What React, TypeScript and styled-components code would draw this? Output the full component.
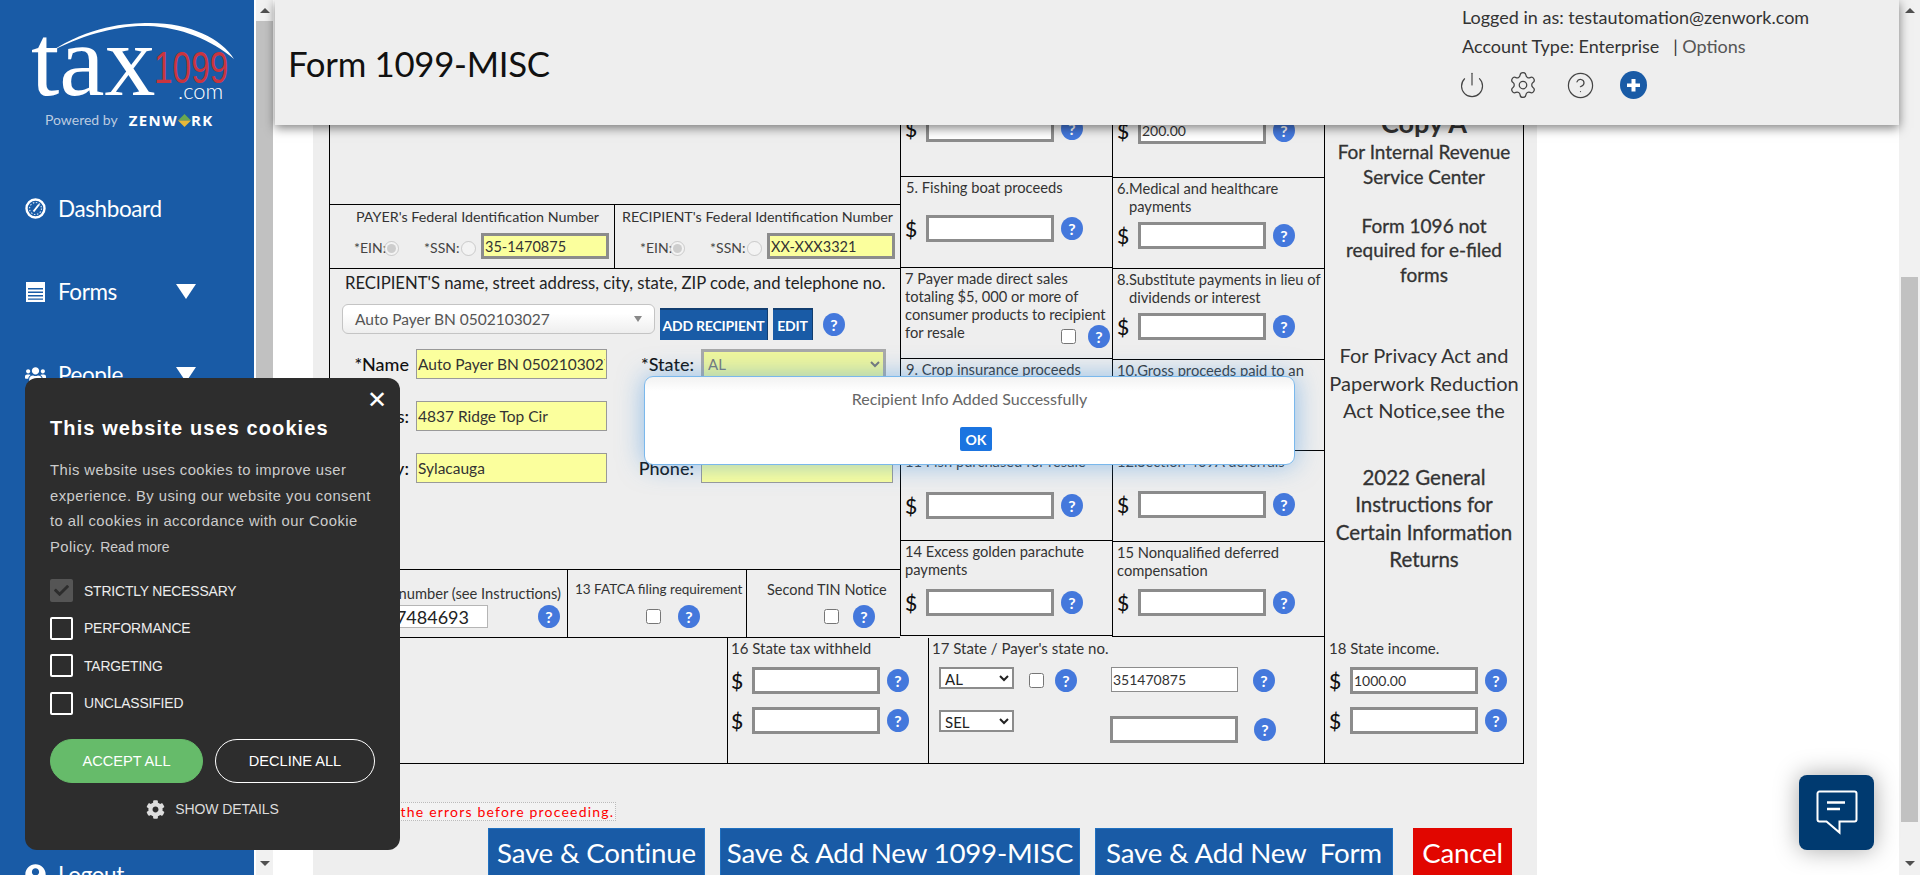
import styled, { createGlobalStyle } from "styled-components";
import { Power, Settings, CircleHelp } from "lucide-react";
import { FaUsers, FaCog, FaCheck, FaUserCircle } from "react-icons/fa";

const GlobalStyle = createGlobalStyle`
  html, body {
    margin: 0;
    height: 100%;
    overflow: hidden;
    background: #fff;
    font-family: Lato, "Open Sans", sans-serif;
  }
  * { box-sizing: border-box; }
`;

const Page = styled.div`
  position: relative;
  display: flex;
  width: 1920px;
  height: 875px;
  overflow: hidden;
`;

/* sidebar */
const Sidebar = styled.aside`
  flex: none;
  width: 254px;
  background: #195ba6;
  color: #fff;
`;
const Logo = styled.div`
  position: relative;
  height: 167px;
`;
const LogoArc = styled.svg`
  position: absolute;
  left: 40px;
  top: 18px;
`;
const LogoTax = styled.span`
  position: absolute;
  left: 31px;
  top: 11px;
  font: 102px/100px "Liberation Serif", serif;
`;
const LogoNum = styled.span`
  position: absolute;
  left: 154px;
  top: 46px;
  font: 44px/44px "Liberation Sans", sans-serif;
  color: #c9353f;
  transform: scaleX(0.76);
  transform-origin: left;
`;
const LogoCom = styled.span`
  position: absolute;
  left: 178px;
  top: 80px;
  font: 300 22px/22px Lato, sans-serif;
`;
const Powered = styled.div`
  position: absolute;
  left: 45px;
  top: 109px;
  display: flex;
  align-items: center;
  width: 190px;
  font-size: 14px;
  line-height: 22px;
  color: #bccbe0;
`;
const Zenwork = styled.b`
  display: flex;
  align-items: center;
  margin-left: 11px;
  font: 700 15px/22px "Open Sans", sans-serif;
  letter-spacing: 1.4px;
  color: #fff;
`;
const Nav = styled.nav`
  display: flex;
  flex-direction: column;
`;
const NavItem = styled.div<{ $mt?: number }>`
  display: flex;
  align-items: center;
  height: 83px;
  margin-top: ${(p) => p.$mt ?? 0}px;
  padding-left: 25px;
  font-size: 22.5px;
  letter-spacing: -0.4px;
`;
const NavLabel = styled.span`
  width: 118px;
  margin-left: 12px;
`;
const Caret = styled.i`
  width: 0;
  height: 0;
  border-left: 10px solid transparent;
  border-right: 10px solid transparent;
  border-top: 15px solid #fff;
`;

/* scrollbars */
const ScrollTrack = styled.div<{ $w: number; $ml: number }>`
  flex: none;
  display: flex;
  flex-direction: column;
  align-items: center;
  width: ${(p) => p.$w}px;
  margin-left: ${(p) => p.$ml}px;
  padding: 8px 0 8px;
  background: #f1f1f1;
`;
const Thumb = styled.div<{ $mt: number; $h: number; $w: number }>`
  width: ${(p) => p.$w}px;
  height: ${(p) => p.$h}px;
  margin-top: ${(p) => p.$mt}px;
  background: #c1c1c1;
`;
const ArrowUp = styled.i`
  width: 0;
  height: 0;
  border-left: 5px solid transparent;
  border-right: 5px solid transparent;
  border-bottom: 5px solid #505050;
`;
const ArrowDown = styled.i`
  width: 0;
  height: 0;
  margin-top: auto;
  margin-bottom: 1px;
  border-left: 5px solid transparent;
  border-right: 5px solid transparent;
  border-top: 5px solid #505050;
`;

/* header */
const Main = styled.main`
  position: relative;
  flex: 1;
  min-width: 0;
  padding-left: 40px;
`;
const Header = styled.header`
  position: absolute;
  z-index: 5;
  left: 2px;
  right: 0;
  top: 0;
  height: 125px;
  display: flex;
  justify-content: space-between;
  padding: 0 90px 0 13px;
  background: #eee;
  box-shadow: 0 3px 10px rgba(0, 0, 0, 0.5);
`;
const PageTitle = styled.h1`
  margin: 43px 0 0;
  font-size: 34.8px;
  line-height: 42px;
  font-weight: 400;
  letter-spacing: -0.3px;
  color: #111;
`;
const UserBox = styled.div`
  width: 347px;
  padding-top: 3px;
  font-size: 18px;
  line-height: 29px;
  white-space: nowrap;
  color: #333;
`;
const Options = styled.span`
  color: #555;
`;
const HeaderIcons = styled.div`
  display: flex;
  align-items: center;
  height: 30px;
  margin: 9px 0 0 -4px;
  color: #444;
`;
const IconSlot = styled.span<{ $w: number }>`
  display: flex;
  width: ${(p) => p.$w}px;
`;

/* form */
const Panel = styled.section`
  width: 1224px;
  height: 875px;
  padding-left: 16px;
  background: #eee;
`;
const FormGrid = styled.div`
  display: grid;
  grid-template-columns: 571px 424px 200px;
  grid-template-rows: 638px 126px;
  width: 1196px;
  font-size: 14px;
  line-height: 18px;
  color: #222;
`;
const LeftCol = styled.div`
  display: flex;
  flex-direction: column;
  border-left: 1px solid #000;
  border-bottom: 1px solid #000;
`;
const TopBlank = styled.div`
  height: 205px;
  border-bottom: 1px solid #000;
`;
const FinRow = styled.div`
  display: flex;
  height: 64px;
  border-bottom: 1px solid #000;
`;
const FinCell = styled.div<{ $w: number; $pad: number; $border?: boolean }>`
  width: ${(p) => p.$w}px;
  padding: 3px 0 0 ${(p) => p.$pad}px;
  border-left: ${(p) => (p.$border ? "1px solid #000" : "none")};
`;
const FinTitle = styled.div<{ $ml: number }>`
  margin-left: ${(p) => p.$ml}px;
  font-size: 14.3px;
  white-space: nowrap;
  color: #333;
`;
const FinInputs = styled.div`
  display: flex;
  align-items: center;
  margin-top: 7px;
`;
const FinLabel = styled.span<{ $w: number }>`
  width: ${(p) => p.$w}px;
  padding-top: 4px;
  color: #444;
`;
const Radio = styled.input.attrs({ type: "radio", disabled: true })`
  flex: none;
  width: 15px;
  height: 15px;
  margin: 4px 0 0;
`;
const YellowInput = styled.input.attrs({ readOnly: true })<{ $w: number; $thin?: boolean; $ml?: number }>`
  flex: none;
  width: ${(p) => p.$w}px;
  height: ${(p) => (p.$thin ? 30 : 26)}px;
  margin-left: ${(p) => p.$ml ?? 0}px;
  padding: 0 1px;
  border: ${(p) => (p.$thin ? "1px solid #999" : "3px solid #8c8c8c")};
  border-radius: 0;
  outline: none;
  background: #fbff9d;
  font: ${(p) => (p.$thin ? 15.5 : 14.5)}px Lato, sans-serif;
  color: #333;
`;
const RecipientBox = styled.div`
  height: 301px;
  padding-top: 2px;
  border-bottom: 1px solid #000;
`;
const RecipientTitle = styled.div`
  margin-left: 15px;
  font-size: 16.7px;
  line-height: 24px;
  white-space: nowrap;
  color: #222;
`;
const PickRow = styled.div`
  display: flex;
  align-items: flex-start;
  margin: 9px 0 0 12px;
`;
const RecipientPick = styled.div`
  display: flex;
  align-items: center;
  justify-content: space-between;
  width: 313px;
  height: 30px;
  padding: 0 12px;
  border: 1px solid #c4c4c4;
  border-radius: 6px;
  background: linear-gradient(#fff 30%, #eee);
  font-size: 15.5px;
  color: #555;
`;
const PickCaret = styled.i`
  width: 0;
  height: 0;
  border-left: 4px solid transparent;
  border-right: 4px solid transparent;
  border-top: 6px solid #888;
`;
const BlueButton = styled.button<{ $w: number }>`
  width: ${(p) => p.$w}px;
  height: 32px;
  margin: 4px 0 0 5px;
  padding: 0;
  border: 0;
  border-top: 2px solid #123e70;
  border-right: 1px solid #123e70;
  background: #195ba6;
  font: 700 14px Lato, sans-serif;
  letter-spacing: -0.2px;
  color: #fff;
`;
const FieldRow = styled.div<{ $mt: number }>`
  display: flex;
  align-items: center;
  height: 30px;
  margin-top: ${(p) => p.$mt}px;
  padding-left: 25px;
`;
const FieldLabel = styled.label<{ $w: number }>`
  flex: none;
  display: flex;
  justify-content: flex-end;
  width: ${(p) => p.$w}px;
  padding-right: 7px;
  white-space: nowrap;
  font-size: 18px;
  font-weight: 500;
  color: #111;
`;
const StateSelect = styled.select.attrs({ disabled: true })`
  width: 185px;
  height: 30px;
  border: 3px solid #a9a9a9;
  border-radius: 0;
  background: #f0f79c;
  font: 15px Lato, sans-serif;
  color: #777;
  opacity: 1;
`;
const InfoRow = styled.div`
  display: flex;
  height: 67px;
`;
const InfoCell = styled.div<{ $w: number; $border?: boolean; $pt: number }>`
  width: ${(p) => p.$w}px;
  padding-top: ${(p) => p.$pt}px;
  border-left: ${(p) => (p.$border ? "1px solid #000" : "none")};
  white-space: nowrap;
`;
const AccountTitle = styled.div`
  padding-right: 6px;
  text-align: right;
  font-size: 14.7px;
  color: #333;
`;
const AccountRow = styled.div`
  display: flex;
  justify-content: flex-end;
  align-items: center;
  margin-top: 3px;
  padding-right: 7px;
`;
const AccountInput = styled.input.attrs({ readOnly: true })`
  width: 150px;
  height: 23px;
  margin-right: 50px;
  padding: 0 18px 0 0;
  border: 1px solid #b5b5b5;
  border-radius: 0;
  background: #fff;
  text-align: right;
  font: 18px Lato, sans-serif;
  color: #222;
`;
const InfoTitle = styled.div<{ $ml: number; $size: number }>`
  margin-left: ${(p) => p.$ml}px;
  font-size: ${(p) => p.$size}px;
  color: #333;
`;
const CheckRow = styled.div<{ $pl: number; $gap: number; $mt: number }>`
  display: flex;
  align-items: center;
  gap: ${(p) => p.$gap}px;
  margin-top: ${(p) => p.$mt}px;
  padding-left: ${(p) => p.$pl}px;
`;
const CheckBox = styled.input.attrs({ type: "checkbox" })<{ $ml?: number }>`
  flex: none;
  width: 15px;
  height: 15px;
  margin: 0 0 0 ${(p) => p.$ml ?? 0}px;
`;

const MidCols = styled.div`
  display: grid;
  grid-template-columns: 212px 212px;
  align-items: start;
`;
const MidCol = styled.div`
  display: flex;
  flex-direction: column;
`;
const BoxCell = styled.div<{ $h: number }>`
  height: ${(p) => p.$h}px;
  padding: 1px 2px 0 4px;
  border-left: 1px solid #000;
  border-bottom: 1px solid #000;
`;
const CellTitle = styled.div<{ $hang?: boolean; $pl?: number; $size?: number }>`
  padding-left: ${(p) => (p.$hang ? 12 : p.$pl ?? 0)}px;
  text-indent: ${(p) => (p.$hang ? -12 : 0)}px;
  font-size: ${(p) => p.$size ?? 14.7}px;
  color: #333;
  white-space: nowrap;
`;
const ResaleRow = styled.div`
  display: flex;
  align-items: flex-start;
  height: 18px;
`;
const ResaleTools = styled.div`
  display: flex;
  align-items: center;
  gap: 12px;
  margin: 2px 0 0 auto;
`;
const MoneyRow = styled.div<{ $mt: number }>`
  display: flex;
  align-items: center;
  margin-top: ${(p) => p.$mt}px;
`;
const Dollar = styled.span`
  width: 21px;
  font-size: 21px;
  line-height: 26px;
  font-weight: 500;
  color: #111;
`;
const AmountInput = styled.input.attrs({ readOnly: true })<{ $w?: number; $h?: number; $thin?: boolean; $ml?: number }>`
  flex: none;
  width: ${(p) => p.$w ?? 128}px;
  height: ${(p) => p.$h ?? 27}px;
  margin-left: ${(p) => p.$ml ?? 0}px;
  padding: 0 1px;
  border: ${(p) => (p.$thin ? "1px solid #8c8c8c" : "3px solid #8c8c8c")};
  border-radius: 0;
  background: #fff;
  font: 14px Lato, sans-serif;
  color: #333;
`;
const Help = styled.span<{ $ml?: number }>`
  flex: none;
  display: inline-flex;
  align-items: center;
  justify-content: center;
  width: 22px;
  height: 23px;
  margin-left: ${(p) => p.$ml ?? 0}px;
  border-radius: 50%;
  background: #4478dc;
  font-size: 16px;
  font-weight: 700;
  color: #fff;
`;
const CopyCol = styled.div`
  padding-top: 106px;
  border-left: 1px solid #000;
  border-right: 1px solid #000;
  text-align: center;
  color: #333;
`;
const CopyHead = styled.div`
  font-size: 27px;
  line-height: 34px;
  font-weight: 700;
`;
const CopyBlock = styled.div<{ $mt: number; $size: number; $lh: number; $heavy?: boolean }>`
  margin-top: ${(p) => p.$mt}px;
  font-size: ${(p) => p.$size}px;
  line-height: ${(p) => p.$lh}px;
  -webkit-text-stroke: ${(p) => (p.$heavy ? "0.3px" : "0")};
`;
const BottomRow = styled.div`
  grid-column: 1 / 3;
  display: flex;
  border-bottom: 1px solid #000;
`;
const BottomCell = styled.div<{ $w: number; $border?: boolean }>`
  width: ${(p) => p.$w}px;
  padding: 1px 0 0 3px;
  border-left: ${(p) => (p.$border ? "1px solid #000" : "none")};
`;
const BlankCell = styled.div`
  width: 398px;
  border-left: 1px solid #000;
`;
const LastCell = styled.div`
  padding: 1px 0 0 4px;
  border-left: 1px solid #000;
  border-right: 1px solid #000;
  border-bottom: 1px solid #000;
`;
const StateRow = styled.div<{ $mt: number }>`
  display: flex;
  align-items: flex-start;
  margin-top: ${(p) => p.$mt}px;
`;
const SmallSelect = styled.select`
  flex: none;
  width: 75px;
  height: 22px;
  margin-left: 7px;
  border: 2px solid #8c8c8c;
  border-radius: 0;
  background: #fff;
  font: 15px Lato, sans-serif;
  color: #222;
`;
const ErrorNote = styled.div`
  width: max-content;
  margin: 38px 0 0 43px;
  padding: 0 1px;
  border: 1px dotted #bbb;
  background: #f3f3f3;
  font-size: 14px;
  line-height: 17px;
  letter-spacing: 1.2px;
  color: #f00;
`;
const ActionRow = styled.div`
  display: flex;
  margin: 7px 0 0 159px;
`;
const ActionButton = styled.button<{ $w: number; $ml: number; $red?: boolean }>`
  flex: none;
  width: ${(p) => p.$w}px;
  height: 60px;
  margin-left: ${(p) => p.$ml}px;
  padding: 0 0 12px;
  border: 1px solid ${(p) => (p.$red ? "#e10600" : "#2070c0")};
  background: ${(p) => (p.$red ? "#e10600" : "#195ba6")};
  white-space: pre;
  font: 27.7px Lato, sans-serif;
  letter-spacing: -0.2px;
  color: #fff;
`;

/* overlays */
const Dialog = styled.div`
  position: absolute;
  z-index: 4;
  left: 371px;
  top: 376px;
  width: 651px;
  height: 89px;
  padding-top: 13px;
  border: 1px solid #7ab8ec;
  border-radius: 9px;
  background: linear-gradient(#f2f2f2, #fff 14px);
  box-shadow: 0 0 26px rgba(70, 150, 225, 0.55);
  text-align: center;
  font-size: 16px;
  line-height: 18px;
  color: #666;
`;
const OkButton = styled.button`
  display: block;
  width: 32px;
  height: 24px;
  margin: 19px 0 0 315px;
  padding: 0;
  border: 0;
  border-radius: 2px;
  background: #1b74e0;
  font: 700 14px Lato, sans-serif;
  color: #fff;
`;
const Cookie = styled.div`
  position: absolute;
  z-index: 10;
  left: 25px;
  top: 378px;
  width: 375px;
  height: 472px;
  padding: 36px 25px 0;
  border-radius: 12px;
  background: #2d2d2d;
  font-family: "Liberation Sans", Arial, sans-serif;
  color: #fff;
`;
const CookieClose = styled.span`
  position: absolute;
  right: 13px;
  top: 8px;
  font-size: 24px;
  line-height: 28px;
`;
const CookieTitle = styled.div`
  font-size: 20px;
  line-height: 28px;
  font-weight: 700;
  letter-spacing: 1.1px;
`;
const CookieText = styled.p`
  margin: 16px 0 0;
  font-size: 14.8px;
  line-height: 25.6px;
  letter-spacing: 0.45px;
  color: #ccc;
`;
const ReadMore = styled.span`
  font-size: 14px;
  letter-spacing: 0;
`;
const ConsentList = styled.div`
  margin-top: 19px;
`;
const ConsentRow = styled.div`
  display: flex;
  align-items: center;
  height: 23px;
  margin-bottom: 14.5px;
  font-size: 13.9px;
  letter-spacing: -0.15px;
  color: #eee;
`;
const ConsentBox = styled.span<{ $on?: boolean }>`
  display: flex;
  align-items: center;
  justify-content: center;
  width: 23px;
  height: 23px;
  margin-right: 11px;
  border: ${(p) => (p.$on ? "0" : "2px solid #fff")};
  border-radius: 2px;
  background: ${(p) => (p.$on ? "#555" : "transparent")};
  color: #2d2d2d;
`;
const CookieButtons = styled.div`
  display: flex;
  gap: 12px;
  margin-top: 24px;
`;
const PillButton = styled.button<{ $w: number; $green?: boolean }>`
  width: ${(p) => p.$w}px;
  height: 44px;
  padding: 0;
  border: 1px solid ${(p) => (p.$green ? "#66bb6a" : "#fff")};
  border-radius: 22px;
  background: ${(p) => (p.$green ? "#66bb6a" : "transparent")};
  font: 14.6px "Liberation Sans", Arial, sans-serif;
  color: #fff;
`;
const ShowDetails = styled.div`
  display: flex;
  align-items: center;
  justify-content: center;
  gap: 10px;
  margin-top: 17px;
  font-size: 14px;
  letter-spacing: -0.1px;
  color: #ddd;
`;
const ChatButton = styled.div`
  position: absolute;
  z-index: 6;
  right: 46px;
  bottom: 25px;
  display: flex;
  align-items: center;
  justify-content: center;
  width: 75px;
  height: 75px;
  border-radius: 8px;
  background: #003a70;
  box-shadow: 0 0 24px rgba(0, 0, 0, 0.35);
`;

const DashIcon = () => (
  <svg width="21" height="21" viewBox="0 0 21 21" fill="none">
    <circle cx="10.5" cy="10.5" r="9" stroke="#fff" strokeWidth="2.4" />
    <circle cx="10.5" cy="10.5" r="6" stroke="#cfe0f2" strokeWidth="1.2" strokeDasharray="1.5 1.6" />
    <path d="M8.5 13.5 14 6.5" stroke="#fff" strokeWidth="2" />
  </svg>
);

const FormsIcon = () => (
  <svg width="21" height="21" viewBox="0 0 21 21" fill="#fff">
    <rect x="1" y="1" width="19" height="20" />
    <path d="M3 7h15v1.4H3zM3 10.5h15v1.4H3zM3 14h15v1.4H3zM3 17.5h15v1.2H3z" fill="#195ba6" />
  </svg>
);

const ChatIcon = () => (
  <svg width="42" height="46" viewBox="0 0 42 46" fill="none" stroke="#fff">
    <path d="M3.5 1.500h35a2 2 0 0 1 2 2v26a2 2 0 0 1-2 2H23.500v11l-13-11H3.500a2 2 0 0 1-2-2v-26a2 2 0 0 1 2-2z" strokeWidth="2" />
    <path d="M11 12.500h18M11 19h13" strokeWidth="2.4" />
  </svg>
);

const Money = ({ mt, value = "" }: { mt: number; value?: string }) => (
  <MoneyRow $mt={mt}>
    <Dollar>$</Dollar>
    <AmountInput value={value} />
    <Help $ml={7}>?</Help>
  </MoneyRow>
);

export default function App() {
  return (
    <Page>
      <GlobalStyle />
      <Sidebar>
        <Logo>
          <LogoArc width="200" height="50" viewBox="0 0 200 50">
            <path d="M10 34C50 8 85 5 110 5c40 0 72 16 84 36C172 22 140 9 108 8 76 7 40 18 10 34z" fill="#fff" />
          </LogoArc>
          <LogoTax>tax</LogoTax>
          <LogoNum>1099</LogoNum>
          <LogoCom>.com</LogoCom>
          <Powered>
            Powered by
            <Zenwork>
              ZENW
              <svg width="13" height="13" viewBox="0 0 13 13">
                <path d="M6.500 0 13 6.500H0z" fill="#6aa84f" />
                <path d="M6.500 13 0 6.500h13z" fill="#e8b93a" />
              </svg>
              RK
            </Zenwork>
          </Powered>
        </Logo>
        <Nav>
          <NavItem>
            <DashIcon />
            <NavLabel>Dashboard</NavLabel>
          </NavItem>
          <NavItem>
            <FormsIcon />
            <NavLabel>Forms</NavLabel>
            <Caret />
          </NavItem>
          <NavItem>
            <FaUsers size={21} />
            <NavLabel>People</NavLabel>
            <Caret />
          </NavItem>
          <NavItem $mt={417}>
            <FaUserCircle size={21} />
            <NavLabel>Logout</NavLabel>
          </NavItem>
        </Nav>
      </Sidebar>
      <ScrollTrack $w={17} $ml={2}>
        <ArrowUp />
        <Thumb $w={17} $h={480} $mt={8} />
        <ArrowDown />
      </ScrollTrack>

      <Main>
        <Header>
          <PageTitle>Form 1099-MISC</PageTitle>
          <UserBox>
            <div>Logged in as: testautomation@zenwork.com</div>
            <div>
              Account Type: Enterprise &nbsp; | <Options>Options</Options>
            </div>
            <HeaderIcons>
              <IconSlot $w={50}>
                <Power size={28} strokeWidth={1} />
              </IconSlot>
              <IconSlot $w={58}>
                <Settings size={30} strokeWidth={1} />
              </IconSlot>
              <IconSlot $w={54}>
                <CircleHelp size={29} strokeWidth={1} />
              </IconSlot>
              <svg width="27" height="28" viewBox="0 0 27 28">
                <ellipse cx="13.5" cy="14" rx="13.5" ry="14" fill="#195ba6" />
                <path d="M11.500 8h4v4.500H20v3.500h-4.500v4.500h-4V16H7v-3.500h4.500z" fill="#fff" />
              </svg>
            </HeaderIcons>
          </UserBox>
        </Header>

        <Panel>
          <FormGrid>
            <LeftCol>
              <TopBlank />
              <FinRow>
                <FinCell $w={284} $pad={24}>
                  <FinTitle $ml={2}>PAYER's Federal Identification Number</FinTitle>
                  <FinInputs>
                    <FinLabel $w={30}>*EIN:</FinLabel>
                    <Radio defaultChecked name="payer" />
                    <FinLabel $w={62}>&nbsp;&nbsp;&nbsp;&nbsp;&nbsp;&nbsp;&nbsp;*SSN:</FinLabel>
                    <Radio name="payer" />
                    <YellowInput $w={128} $ml={5} value="35-1470875" />
                  </FinInputs>
                </FinCell>
                <FinCell $w={286} $pad={25} $border>
                  <FinTitle $ml={-18}>RECIPIENT's Federal Identification Number</FinTitle>
                  <FinInputs>
                    <FinLabel $w={30}>*EIN:</FinLabel>
                    <Radio defaultChecked name="recipient" />
                    <FinLabel $w={62}>&nbsp;&nbsp;&nbsp;&nbsp;&nbsp;&nbsp;&nbsp;*SSN:</FinLabel>
                    <Radio name="recipient" />
                    <YellowInput $w={128} $ml={5} value="XX-XXX3321" />
                  </FinInputs>
                </FinCell>
              </FinRow>
              <RecipientBox>
                <RecipientTitle>RECIPIENT'S name, street address, city, state, ZIP code, and telephone no.</RecipientTitle>
                <PickRow>
                  <RecipientPick>
                    Auto Payer BN 0502103027
                    <PickCaret />
                  </RecipientPick>
                  <BlueButton $w={108}>ADD RECIPIENT</BlueButton>
                  <BlueButton $w={40}>EDIT</BlueButton>
                  <Help $ml={10} style={{ marginTop: 9 }}>?</Help>
                </PickRow>
                <FieldRow $mt={9}>
                  <FieldLabel $w={61}>*Name</FieldLabel>
                  <YellowInput $w={191} $thin value="Auto Payer BN 0502103027" />
                  <FieldLabel $w={94}>*State:</FieldLabel>
                  <StateSelect>
                    <option>AL</option>
                  </StateSelect>
                </FieldRow>
                <FieldRow $mt={22}>
                  <FieldLabel $w={61}>*Address:</FieldLabel>
                  <YellowInput $w={191} $thin value="4837 Ridge Top Cir" />
                </FieldRow>
                <FieldRow $mt={22}>
                  <FieldLabel $w={61}>*City:</FieldLabel>
                  <YellowInput $w={191} $thin value="Sylacauga" />
                  <FieldLabel $w={94}>Phone:</FieldLabel>
                  <YellowInput $w={192} $thin value="" />
                </FieldRow>
              </RecipientBox>
              <InfoRow>
                <InfoCell $w={237} $pt={14}>
                  <AccountTitle>Account number (see Instructions)</AccountTitle>
                  <AccountRow>
                    <AccountInput value="7484693" />
                    <Help>?</Help>
                  </AccountRow>
                </InfoCell>
                <InfoCell $w={179} $pt={10} $border>
                  <InfoTitle $ml={7} $size={13.5}>13 FATCA filing requirement</InfoTitle>
                  <CheckRow $pl={78} $gap={17} $mt={7}>
                    <CheckBox />
                    <Help>?</Help>
                  </CheckRow>
                </InfoCell>
                <InfoCell $w={154} $pt={11} $border>
                  <InfoTitle $ml={20} $size={14.5}>Second TIN Notice</InfoTitle>
                  <CheckRow $pl={77} $gap={14} $mt={6}>
                    <CheckBox />
                    <Help>?</Help>
                  </CheckRow>
                </InfoCell>
              </InfoRow>
            </LeftCol>

            <MidCols>
              <MidCol>
                <BoxCell $h={177}>
                  <Money mt={114} />
                </BoxCell>
                <BoxCell $h={91}>
                  <CellTitle $pl={1}>5. Fishing boat proceeds</CellTitle>
                  <Money mt={19} />
                </BoxCell>
                <BoxCell $h={91}>
                  <CellTitle>7 Payer made direct sales</CellTitle>
                  <CellTitle>totaling $5, 000 or more of</CellTitle>
                  <CellTitle>consumer products to recipient</CellTitle>
                  <ResaleRow>
                    <CellTitle>for resale</CellTitle>
                    <ResaleTools>
                      <CheckBox />
                      <Help>?</Help>
                    </ResaleTools>
                  </ResaleRow>
                </BoxCell>
                <BoxCell $h={92}>
                  <CellTitle $pl={1}>9. Crop insurance proceeds</CellTitle>
                  <Money mt={22} />
                </BoxCell>
                <BoxCell $h={90}>
                  <CellTitle>11 Fish purchased for resale</CellTitle>
                  <Money mt={22} />
                </BoxCell>
                <BoxCell $h={95}>
                  <CellTitle>14 Excess golden parachute</CellTitle>
                  <CellTitle>payments</CellTitle>
                  <Money mt={11} />
                </BoxCell>
              </MidCol>
              <MidCol>
                <BoxCell $h={178}>
                  <Money mt={116} value="200.00" />
                </BoxCell>
                <BoxCell $h={91}>
                  <CellTitle $hang>
                    6.Medical and healthcare
                    <br />
                    payments
                  </CellTitle>
                  <Money mt={7} />
                </BoxCell>
                <BoxCell $h={91}>
                  <CellTitle $hang>
                    8.Substitute payments in lieu of
                    <br />
                    dividends or interest
                  </CellTitle>
                  <Money mt={7} />
                </BoxCell>
                <BoxCell $h={91}>
                  <CellTitle $hang>
                    10.Gross proceeds paid to an
                    <br />
                    attorney
                  </CellTitle>
                  <Money mt={4} />
                </BoxCell>
                <BoxCell $h={91}>
                  <CellTitle>12.Section 409A deferrals</CellTitle>
                  <Money mt={21} />
                </BoxCell>
                <BoxCell $h={95}>
                  <CellTitle>15 Nonqualified deferred</CellTitle>
                  <CellTitle>compensation</CellTitle>
                  <Money mt={10} />
                </BoxCell>
              </MidCol>
            </MidCols>

            <CopyCol>
              <CopyHead>Copy A</CopyHead>
              <CopyBlock $mt={0} $size={19} $lh={24.5} $heavy>
                For Internal Revenue
                <br />
                Service Center
                <br />
                <br />
                Form 1096 not
                <br />
                required for e-filed
                <br />
                forms
              </CopyBlock>
              <CopyBlock $mt={55} $size={20} $lh={27.5}>
                For Privacy Act and
                <br />
                Paperwork Reduction
                <br />
                Act Notice,see the
              </CopyBlock>
              <CopyBlock $mt={39} $size={20.5} $lh={27.5} $heavy>
                2022 General
                <br />
                Instructions for
                <br />
                Certain Information
                <br />
                Returns
              </CopyBlock>
            </CopyCol>

            <BottomRow>
              <BlankCell />
              <BottomCell $w={201} $border>
                <CellTitle $size={15}>16 State tax withheld</CellTitle>
                <Money mt={10} />
                <Money mt={13} />
              </BottomCell>
              <BottomCell $w={396} $border>
                <CellTitle $size={15}>17 State / Payer's state no.</CellTitle>
                <StateRow $mt={10}>
                  <SmallSelect>
                    <option>AL</option>
                  </SmallSelect>
                  <CheckBox $ml={15} style={{ marginTop: 6 }} />
                  <Help $ml={11} style={{ marginTop: 2 }}>?</Help>
                  <AmountInput $thin $w={127} $h={25} $ml={34} value="351470875" />
                  <Help $ml={15} style={{ marginTop: 2 }}>?</Help>
                </StateRow>
                <StateRow $mt={18}>
                  <SmallSelect>
                    <option>SEL</option>
                  </SmallSelect>
                  <AmountInput $w={128} $ml={96} style={{ marginTop: 6 }} />
                  <Help $ml={16} style={{ marginTop: 8 }}>?</Help>
                </StateRow>
              </BottomCell>
            </BottomRow>
            <LastCell>
              <CellTitle $size={15}>18 State income.</CellTitle>
              <Money mt={10} value="1000.00" />
              <Money mt={13} />
            </LastCell>
          </FormGrid>

          <ErrorNote>Fix the errors before proceeding.</ErrorNote>
          <ActionRow>
            <ActionButton $w={217} $ml={0}>Save &amp; Continue</ActionButton>
            <ActionButton $w={360} $ml={15}>Save &amp; Add New 1099-MISC</ActionButton>
            <ActionButton $w={298} $ml={15}>Save &amp; Add New  Form</ActionButton>
            <ActionButton $w={99} $ml={20} $red>Cancel</ActionButton>
          </ActionRow>
        </Panel>

        <Dialog>
          Recipient Info Added Successfully
          <OkButton>OK</OkButton>
        </Dialog>
      </Main>

      <ScrollTrack $w={21} $ml={0}>
        <ArrowUp />
        <Thumb $w={17} $h={545} $mt={264} />
        <ArrowDown />
      </ScrollTrack>

      <Cookie>
        <CookieClose>✕</CookieClose>
        <CookieTitle>This website uses cookies</CookieTitle>
        <CookieText>
          This website uses cookies to improve user experience. By using our website you consent to all cookies in accordance with our Cookie Policy. <ReadMore>Read more</ReadMore>
        </CookieText>
        <ConsentList>
          <ConsentRow>
            <ConsentBox $on>
              <FaCheck size={15} />
            </ConsentBox>
            STRICTLY NECESSARY
          </ConsentRow>
          <ConsentRow>
            <ConsentBox />
            PERFORMANCE
          </ConsentRow>
          <ConsentRow>
            <ConsentBox />
            TARGETING
          </ConsentRow>
          <ConsentRow>
            <ConsentBox />
            UNCLASSIFIED
          </ConsentRow>
        </ConsentList>
        <CookieButtons>
          <PillButton $w={153} $green>ACCEPT ALL</PillButton>
          <PillButton $w={160}>DECLINE ALL</PillButton>
        </CookieButtons>
        <ShowDetails>
          <FaCog size={19} />
          SHOW DETAILS
        </ShowDetails>
      </Cookie>

      <ChatButton>
        <ChatIcon />
      </ChatButton>
    </Page>
  );
}
